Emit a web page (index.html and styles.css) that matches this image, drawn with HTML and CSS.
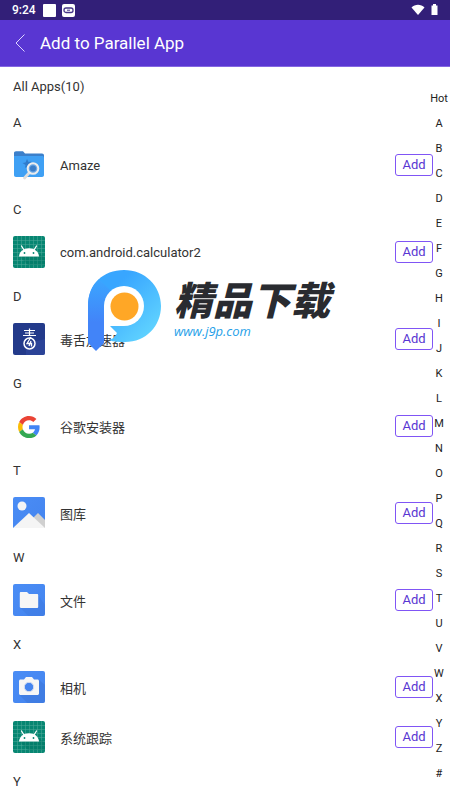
FILE: index.html
```html
<!DOCTYPE html>
<html lang="en">
<head>
  <meta charset="UTF-8">
  <meta name="viewport" content="width=device-width, initial-scale=1.0">
  <title>Add to Parallel App</title>
  <link rel="stylesheet" href="styles.css">
</head>
<body>

  <!-- Shared icon shapes -->
  <svg class="defs" aria-hidden="true">
    <defs>
      <linearGradient id="blue" x1="0" y1="0" x2="1" y2="1">
        <stop offset="0" stop-color="#4a8df5"/>
        <stop offset="1" stop-color="#4484ef"/>
      </linearGradient>
      <symbol id="android" viewBox="0 0 32 32">
        <rect width="32" height="32" rx="2" fill="#078672"/>
        <path d="M4.500 0v32M8.500 0v32M12.500 0v32M16.500 0v32M20.500 0v32M24.500 0v32M28.500 0v32M0 4.500h32M0 8.500h32M0 12.500h32M0 16.500h32M0 20.500h32M0 24.500h32M0 28.500h32" stroke="#51aa9b" stroke-width=".5"/>
        <path d="M7 21l8 8h17V22l-6-5z" fill="#00705f" opacity=".35"/>
        <path d="M8.500 10l2.500 4M23.500 10l-2.500 4" stroke="#fff" stroke-width="1.300" stroke-linecap="round"/>
        <path d="M6 20.500c.3-5 4.500-8.300 10-8.300s9.700 3.300 10 8.300z" fill="#fff"/>
        <circle cx="11.500" cy="17" r=".9" fill="#078672"/>
        <circle cx="20.500" cy="17" r=".9" fill="#078672"/>
      </symbol>
    </defs>
  </svg>

  <!-- Status bar -->
  <div class="status-bar">
    <span class="time">9:24</span>
    <svg width="13" height="13" viewBox="0 0 13 13"><rect width="13" height="13" rx="1" fill="#fff"/></svg>
    <svg width="13" height="13" viewBox="0 0 13 13">
      <rect width="13" height="13" rx="2" fill="#fff"/>
      <rect x="2" y="4" width="9" height="4.500" rx="2" fill="none" stroke="#453388" stroke-width="1.300"/>
      <path d="M5 6.200h3" stroke="#453388"/>
    </svg>
    <svg class="wifi" width="14" height="12" viewBox="0 0 14 12"><path d="M.5 3.500C4-.2 10-.2 13.500 3.500L7 11z" fill="#fff"/></svg>
    <svg width="7" height="12" viewBox="0 0 7 12"><path d="M2 0h3v1.500h1.500V11H.5V1.500H2z" fill="#fff"/></svg>
  </div>

  <!-- Title bar -->
  <header class="title-bar">
    <button class="back" aria-label="Back">
      <svg width="10" height="18" viewBox="0 0 10 18"><path d="M9.500.5L1 9l8.500 8.500" fill="none" stroke="#ddd4ff"/></svg>
    </button>
    <h1>Add to Parallel App</h1>
  </header>

  <!-- App list -->
  <main class="apps">
    <p class="count">All Apps(10)</p>

    <h2 id="A">A</h2>
    <div class="app">
      <svg class="icon" viewBox="0 0 32 32">
        <path d="M1 4c0-1 .8-1.800 2-1.800h7l2 2.300h17c1.200 0 2 .8 2 2V16H1z" fill="#3b7fca"/>
        <path d="M1 7h28c1.200 0 2 .6 2 1.500V26c0 1.300-.8 2-2 2H3c-1.300 0-2-.8-2-2z" fill="#3fa0f4"/>
        <path d="M14 10l1.500 3 3-.5-1.500 3 1 3-3-1.500-3 2 .5-3-3-2 3-.5z" fill="#2f7bcb"/>
        <path d="M16 24l-4.500 5" stroke="#dedede" stroke-width="2.800" stroke-linecap="round"/>
        <circle cx="20" cy="19.500" r="5.300" fill="#69a7e6" stroke="#ececec" stroke-width="2"/>
        <circle cx="20" cy="19.500" r="3" fill="#3a7dc8"/>
      </svg>
      <span class="name">Amaze</span>
      <button class="add">Add</button>
    </div>

    <h2 id="C">C</h2>
    <div class="app">
      <svg class="icon"><use href="#android"/></svg>
      <span class="name">com.android.calculator2</span>
      <button class="add">Add</button>
    </div>

    <h2 id="D">D</h2>
    <div class="app">
      <svg class="icon" viewBox="0 0 32 32">
        <rect width="32" height="32" rx="2" fill="#233a8a"/>
        <path d="M13 32V21l19-5v14a2 2 0 0 1-2 2z" fill="#3049a0" opacity=".6"/>
        <g fill="none" stroke="#fff">
          <path d="M11 7.500h11M12 10h9M10 12.500h13M16.500 5.500v7" stroke-width="1.200"/>
          <circle cx="16.500" cy="20.500" r="5.500" stroke-width="1.500"/>
          <path d="M18 14l-4 6.500h4.500v3M18 18l-2 5" stroke-width="1.300"/>
        </g>
      </svg>
      <span class="name">毒舌加速器</span>
      <button class="add">Add</button>
    </div>

    <h2 id="G">G</h2>
    <div class="app">
      <svg class="icon" viewBox="0 0 32 32">
        <g transform="translate(5 6) scale(.46)">
          <path fill="#ea4335" d="M24 9.500c3.540 0 6.710 1.220 9.210 3.600l6.850-6.850C35.900 2.380 30.470 0 24 0 14.620 0 6.510 5.380 2.560 13.220l7.980 6.190C12.430 13.720 17.740 9.500 24 9.500z"/>
          <path fill="#4285f4" d="M46.980 24.550c0-1.570-.15-3.090-.38-4.550H24v9.020h12.940c-.58 2.960-2.260 5.480-4.780 7.180l7.730 6c4.510-4.180 7.090-10.360 7.090-17.650z"/>
          <path fill="#fbbc05" d="M10.530 28.590c-.48-1.450-.76-2.990-.76-4.590s.27-3.140.76-4.590l-7.980-6.190C.92 16.460 0 20.120 0 24s.92 7.540 2.560 10.780z"/>
          <path fill="#34a853" d="M24 48c6.480 0 11.930-2.130 15.890-5.810l-7.730-6c-2.150 1.450-4.920 2.300-8.160 2.300-6.260 0-11.570-4.220-13.470-9.910l-7.980 6.190C6.510 42.620 14.620 48 24 48z"/>
        </g>
      </svg>
      <span class="name">谷歌安装器</span>
      <button class="add">Add</button>
    </div>

    <h2 id="T">T</h2>
    <div class="app">
      <svg class="icon" viewBox="0 0 32 32">
        <path d="M2 0h28a2 2 0 0 1 2 2v29H0V2a2 2 0 0 1 2-2z" fill="url(#blue)"/>
        <path d="M18 23l7-7 7 7v8H18z" fill="#d0d0d0"/>
        <path d="M0 31l16-15 16 15z" fill="#f5f5f5"/>
        <circle cx="9" cy="9" r="4.500" fill="#f5f5f5"/>
      </svg>
      <span class="name">图库</span>
      <button class="add">Add</button>
    </div>

    <h2 id="W">W</h2>
    <div class="app">
      <svg class="icon" viewBox="0 0 32 32">
        <rect width="32" height="32" rx="2" fill="url(#blue)"/>
        <path d="M7 23.500L15.500 32H30a2 2 0 0 0 2-2v-9L25 11z" fill="#3973d6" opacity=".35"/>
        <path d="M8 8h6l2 2h8c.8 0 1.200.5 1.200 1.200v11.600c0 .8-.5 1.200-1.200 1.200H8c-.8 0-1.200-.5-1.200-1.200V9.200C6.800 8.500 7.200 8 8 8z" fill="#f6f6f6"/>
      </svg>
      <span class="name">文件</span>
      <button class="add">Add</button>
    </div>

    <h2 id="X">X</h2>
    <div class="app">
      <svg class="icon" viewBox="0 0 32 32">
        <rect width="32" height="32" rx="2" fill="url(#blue)"/>
        <path d="M6 23.500l8.500 8.500H30a2 2 0 0 0 2-2V14l-6-5z" fill="#3973d6" opacity=".5"/>
        <path d="M7.500 8.500H11l2-2.500h6l2 2.500h3.500c.8 0 1.500.7 1.500 1.500v12.500c0 .8-.7 1.500-1.500 1.500h-17c-.8 0-1.500-.7-1.500-1.500V10c0-.8.700-1.500 1.500-1.500z" fill="#f6f6f6"/>
        <circle cx="16" cy="16" r="4.700" fill="#4484ef" stroke="#d5deef" stroke-width="1"/>
      </svg>
      <span class="name">相机</span>
      <button class="add">Add</button>
    </div>
    <div class="app">
      <svg class="icon"><use href="#android"/></svg>
      <span class="name">系统跟踪</span>
      <button class="add">Add</button>
    </div>

    <h2 id="Y">Y</h2>

    <!-- Letter index -->
    <nav class="index">
      <a href="#">Hot</a>
      <a href="#A">A</a>
      <a href="#B">B</a>
      <a href="#C">C</a>
      <a href="#D">D</a>
      <a href="#E">E</a>
      <a href="#F">F</a>
      <a href="#G">G</a>
      <a href="#H">H</a>
      <a href="#I">I</a>
      <a href="#J">J</a>
      <a href="#K">K</a>
      <a href="#L">L</a>
      <a href="#M">M</a>
      <a href="#N">N</a>
      <a href="#O">O</a>
      <a href="#P">P</a>
      <a href="#Q">Q</a>
      <a href="#R">R</a>
      <a href="#S">S</a>
      <a href="#T">T</a>
      <a href="#U">U</a>
      <a href="#V">V</a>
      <a href="#W">W</a>
      <a href="#X">X</a>
      <a href="#Y">Y</a>
      <a href="#Z">Z</a>
      <a href="#">#</a>
    </nav>

    <!-- Watermark -->
    <div class="watermark">
      <svg width="74" height="82" viewBox="0 0 74 82">
        <defs>
          <linearGradient id="ring" x1="0" y1="0" x2="1" y2="1">
            <stop offset=".3" stop-color="#38a6ff"/>
            <stop offset="1" stop-color="#68dcff"/>
          </linearGradient>
          <linearGradient id="stem" x1="0" y1="0" x2="0" y2="1">
            <stop offset="0" stop-color="#3ba6ff"/>
            <stop offset=".6" stop-color="#4284f8"/>
          </linearGradient>
        </defs>
        <path d="M1 37C1 14 16 0 37 0s37 16 37 36-15 36-36 36c-6 0-11 0-16-2 4-1 6-3 8-7l-7-7V36z" fill="url(#ring)"/>
        <path d="M1 36c0-12 4-21 11-27l12 12c-4 5-7 9-7 16v36l-8 8-8-8z" fill="url(#stem)"/>
        <path d="M17 56V36a20 20 0 1 1 20 20z" fill="#fff"/>
        <circle cx="37.500" cy="36.500" r="14" fill="#ffa726"/>
      </svg>
      <div class="brand">
        <strong>精品下载</strong>
        <span>www.j9p.com</span>
      </div>
    </div>
  </main>

</body>
</html>
```

FILE: styles.css
```css
* {
  box-sizing: border-box;
}

body {
  margin: 0;
  background: #fff;
  color: #333;
  font-family: Roboto, "Noto Sans CJK SC", sans-serif;
  font-size: 13px;
}

.defs {
  position: absolute;
  width: 0;
  height: 0;
}

.status-bar {
  display: flex;
  align-items: center;
  gap: 6px;
  height: 20px;
  padding: 0 12px;
  background: #321f78;
  color: #fff;
  font-size: 12px;
  font-weight: 500;
}

.time {
  margin-right: 1px;
}

.wifi {
  margin-left: auto;
}

.title-bar {
  display: flex;
  align-items: center;
  gap: 15px;
  height: 47px;
  padding: 0 15px;
  background: #5936d2;
  border-bottom: 1px solid #8467e2;
  color: #fff;
}

.title-bar h1 {
  margin: 0;
  font-size: 17px;
  font-weight: 400;
}

.back {
  display: flex;
  padding: 0;
  border: none;
  background: none;
  cursor: pointer;
}

.apps {
  position: relative;
  padding: 0 17px 0 13px;
}

.count,
.apps h2 {
  margin: 0;
  padding-top: 2px;
  font-size: 13px;
  font-weight: 400;
  line-height: 35px;
}

.count {
  margin-bottom: -1px;
}

.app {
  display: flex;
  align-items: center;
  height: 50px;
}

.icon {
  width: 32px;
  height: 32px;
  margin-right: 15px;
}

.name {
  flex: 1;
}

.add {
  width: 38px;
  height: 22px;
  padding: 0;
  border: 1px solid #8055f5;
  border-radius: 3px;
  background: #fff;
  color: #5936d2;
  font-family: inherit;
  font-size: 13px;
  line-height: 20px;
  cursor: pointer;
}

/* the index lies over the right edge of the list */
.index {
  position: absolute;
  top: 19px;
  right: 0;
  display: flex;
  flex-direction: column;
  width: 22px;
  text-align: center;
}

.index a {
  color: #222;
  font-size: 11px;
  line-height: 25px;
  text-decoration: none;
}

.watermark {
  position: absolute;
  top: 203px;
  left: 87px;
  display: flex;
  gap: 13px;
  pointer-events: none;
}

.brand {
  display: flex;
  flex-direction: column;
  padding-top: 11px;
}

.brand strong {
  color: #292b30;
  font-size: 39px;
  font-weight: 900;
  font-style: italic;
  line-height: 42px;
}

.brand span {
  color: #269fe9;
  font-family: "Open Sans", sans-serif;
  font-size: 13px;
  font-style: italic;
  line-height: 16px;
}
```
